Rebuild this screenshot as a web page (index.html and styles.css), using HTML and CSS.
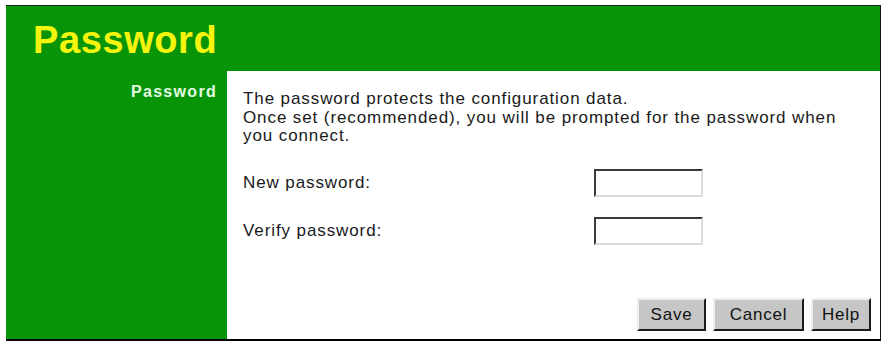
FILE: index.html
```html
<!DOCTYPE html>
<html>
<head>
<meta charset="utf-8">
<link rel="stylesheet" href="styles.css">
</head>
<body>
<div class="frame">
  <div class="header"><h1 class="title">Password</h1></div>
  <div class="main">
    <div class="side"><span class="side-label">Password</span></div>
    <div class="panel">
      <p class="intro">The password protects the configuration data.<br>Once set (recommended), you will be prompted for the password when you connect.</p>
      <div class="fields">
        <label class="field-label">New password:</label>
        <span class="input"></span>
        <label class="field-label">Verify password:</label>
        <span class="input"></span>
      </div>
      <div class="buttons">
        <span class="btn btn-save">Save</span>
        <span class="btn btn-cancel">Cancel</span>
        <span class="btn btn-help">Help</span>
      </div>
    </div>
  </div>
</div>
</body>
</html>
```
FILE: styles.css
```css
html, body {
  margin: 0;
  padding: 0;
  background: #ffffff;
}
body {
  font-family: "Liberation Sans", Arial, sans-serif;
}
.frame {
  margin: 5px 0 0 6px;
  width: 874px;
  height: 333px;
  background: #079407;
  border-top: 1px solid #0b2a0b;
  border-right: 1px solid #0b1a0b;
  border-bottom: 2px solid #000000;
  display: flex;
  flex-direction: column;
}
.header {
  height: 65px;
  display: flex;
  align-items: flex-start;
}
.title {
  margin: 12px 0 0 27px;
  font-size: 38px;
  font-weight: bold;
  color: #f4f40e;
  letter-spacing: 0.6px;
  line-height: 44px;
}
.main {
  flex: 1;
  display: flex;
}
.side {
  width: 221px;
  display: flex;
  justify-content: flex-end;
  align-items: flex-start;
}
.side-label {
  margin: 12px 10px 0 0;
  font-size: 16px;
  font-weight: bold;
  color: #e2fbe2;
  letter-spacing: 1.3px;
  line-height: 18px;
}
.panel {
  flex: 1;
  background: #ffffff;
  padding: 19px 9px 8px 16px;
  display: flex;
  flex-direction: column;
}
.intro {
  margin: 0;
  font-size: 17px;
  line-height: 18.5px;
  color: #1a1a1a;
  letter-spacing: 0.9px;
  width: 600px;
}
.fields {
  margin-top: 23px;
  display: grid;
  grid-template-columns: 351px 109px;
  row-gap: 20px;
  align-items: center;
}
.field-label {
  font-size: 17px;
  color: #1a1a1a;
  letter-spacing: 0.9px;
}
.input {
  display: block;
  height: 24px;
  background: #ffffff;
  border-top: 2px solid #3a3a3a;
  border-left: 2px solid #3a3a3a;
  border-bottom: 2px solid #dcdcdc;
  border-right: 2px solid #dcdcdc;
  box-sizing: content-box;
}
.buttons {
  margin-top: auto;
  display: flex;
  justify-content: flex-end;
  gap: 7px;
}
.btn {
  height: 29px;
  background: #c6c6c6;
  border-top: 2px solid #eeeeee;
  border-left: 2px solid #eeeeee;
  border-right: 2px solid #1c1c1c;
  border-bottom: 2px solid #1c1c1c;
  font-size: 17px;
  color: #111111;
  line-height: 29px;
  text-align: center;
  letter-spacing: 0.8px;
}
.btn-save { width: 65px; }
.btn-cancel { width: 87px; }
.btn-help { width: 56px; }
```
